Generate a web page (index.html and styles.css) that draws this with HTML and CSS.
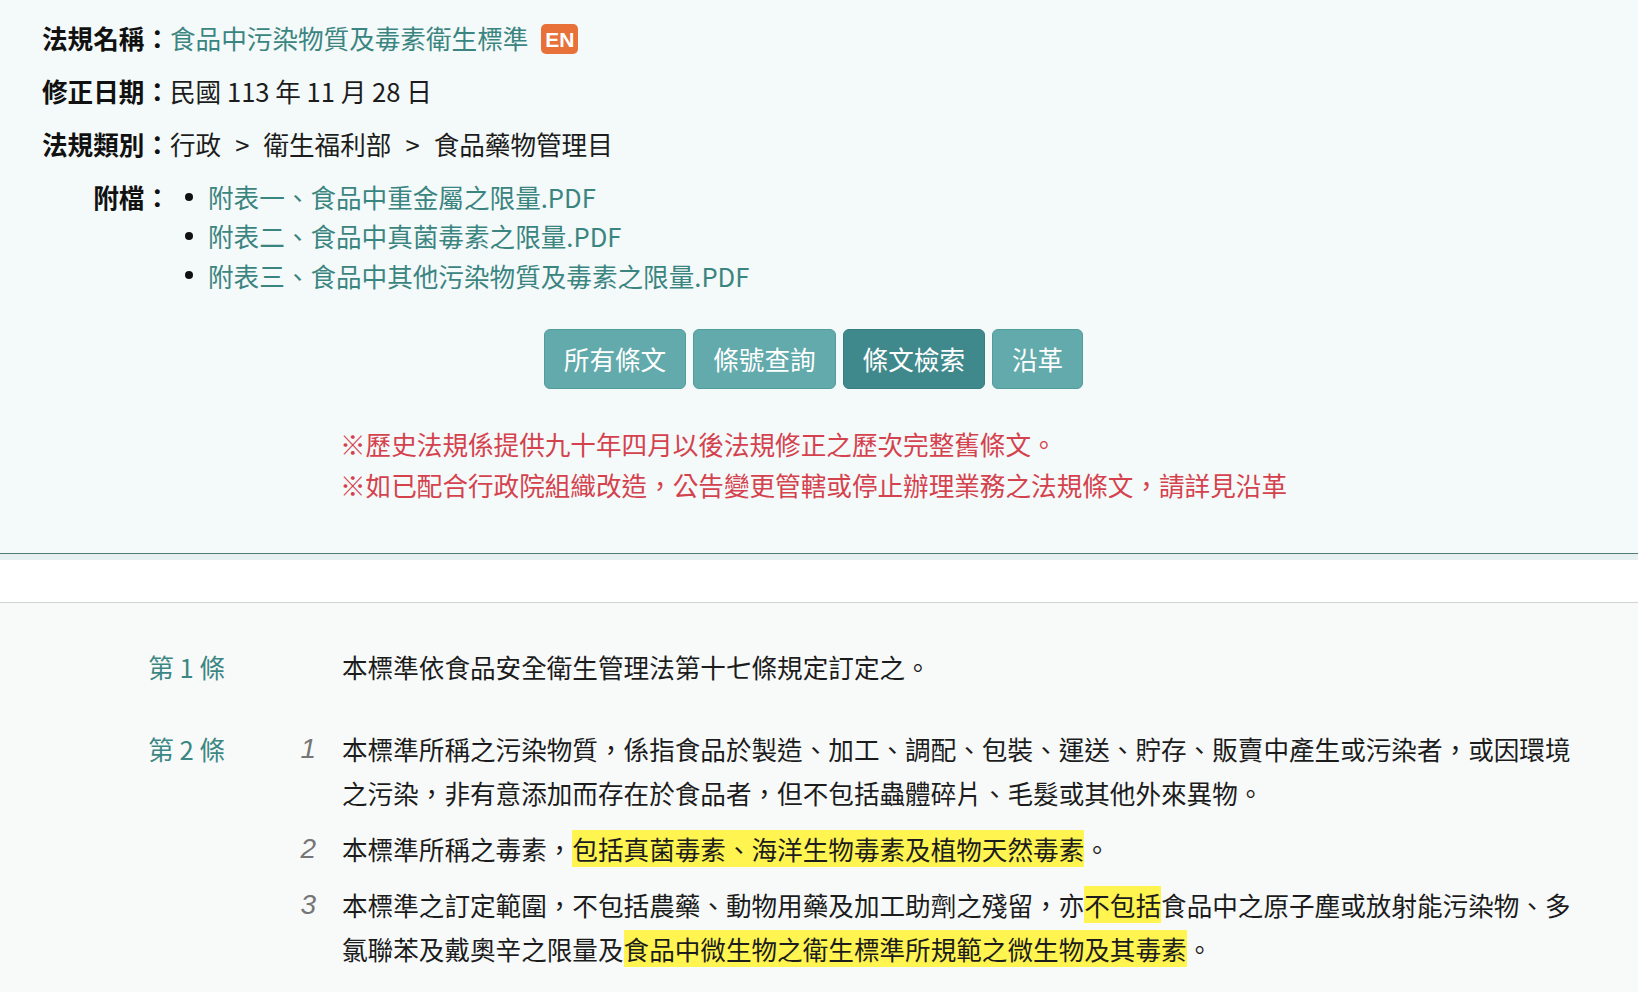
FILE: index.html
```html
<!DOCTYPE html>
<html lang="zh-Hant">
<head>
<meta charset="utf-8">
<title>食品中污染物質及毒素衛生標準</title>
<link rel="stylesheet" href="styles.css">
</head>
<body>
<section class="law-header">
  <div class="meta-row">
    <span class="meta-label">法規名稱：</span>
    <span class="meta-value"><a class="law-link" href="#">食品中污染物質及毒素衛生標準</a><span class="badge-en">EN</span></span>
  </div>
  <div class="meta-row">
    <span class="meta-label">修正日期：</span>
    <span class="meta-value">民國 113 年 11 月 28 日</span>
  </div>
  <div class="meta-row">
    <span class="meta-label">法規類別：</span>
    <span class="meta-value">行政<span class="sep">&gt;</span>衛生福利部<span class="sep">&gt;</span>食品藥物管理目</span>
  </div>
  <div class="meta-row">
    <span class="meta-label">附檔：</span>
    <ul class="attach-list">
      <li><a class="law-link" href="#">附表一、食品中重金屬之限量.PDF</a></li>
      <li><a class="law-link" href="#">附表二、食品中真菌毒素之限量.PDF</a></li>
      <li><a class="law-link" href="#">附表三、食品中其他污染物質及毒素之限量.PDF</a></li>
    </ul>
  </div>
  <nav class="tabs">
    <a class="tab" href="#">所有條文</a>
    <a class="tab" href="#">條號查詢</a>
    <a class="tab active" href="#">條文檢索</a>
    <a class="tab" href="#">沿革</a>
  </nav>
  <div class="notes-wrap">
    <div class="notes">
      <p>※歷史法規係提供九十年四月以後法規修正之歷次完整舊條文。</p>
      <p>※如已配合行政院組織改造，公告變更管轄或停止辦理業務之法規條文，請詳見沿革</p>
    </div>
  </div>
</section>
<div class="tab-strip"></div>
<main class="articles">
  <div class="article">
    <div class="art-no">第 1 條</div>
    <div class="art-body">
      <div class="para"><span class="para-num"></span><div class="para-text">本標準依食品安全衛生管理法第十七條規定訂定之。</div></div>
    </div>
  </div>
  <div class="article">
    <div class="art-no">第 2 條</div>
    <div class="art-body">
      <div class="para"><span class="para-num">1</span><div class="para-text">本標準所稱之污染物質，係指食品於製造、加工、調配、包裝、運送、貯存、販賣中產生或污染者，或因環境之污染，非有意添加而存在於食品者，但不包括蟲體碎片、毛髮或其他外來異物。</div></div>
      <div class="para"><span class="para-num">2</span><div class="para-text">本標準所稱之毒素，<span class="hl">包括真菌毒素、海洋生物毒素及植物天然毒素</span>。</div></div>
      <div class="para"><span class="para-num">3</span><div class="para-text">本標準之訂定範圍，不包括農藥、動物用藥及加工助劑之殘留，亦<span class="hl">不包括</span>食品中之原子塵或放射能污染物、多氯聯苯及戴奧辛之限量及<span class="hl">食品中微生物之衛生標準所規範之微生物及其毒素</span>。</div></div>
    </div>
  </div>
</main>
</body>
</html>
```

FILE: styles.css
```css
body {
  margin: 0;
  font-family: "Noto Sans CJK TC", "Noto Sans", sans-serif;
  font-size: 25.6px;
  color: #1c1c1c;
  background: #f8fafa;
}

.law-header {
  background: #f4f9f9;
  padding: 18px 53px 48px 42px;
  border-bottom: 1px solid #4f7c73;
}

.meta-row {
  display: flex;
  line-height: 40px;
  margin-bottom: 13px;
}

.meta-label {
  flex: none;
  width: 128px;
  text-align: right;
  font-weight: 700;
  color: #111;
  white-space: nowrap;
}

.meta-value {
  display: flex;
  align-items: center;
  white-space: nowrap;
}

.law-link {
  color: #3b8581;
  text-decoration: none;
}

.sep {
  margin: 0 14px;
}

.badge-en {
  display: inline-flex;
  align-items: center;
  justify-content: center;
  width: 37px;
  height: 30px;
  margin: 2px 0 0 13px;
  border-radius: 5px;
  background: #e8713a;
  color: #fff;
  font-family: "Liberation Sans", sans-serif;
  font-weight: 700;
  font-size: 21px;
  line-height: 1;
}

.attach-list {
  list-style: none;
  margin: 0;
  padding: 0 0 0 15px;
}

.attach-list li {
  display: flex;
  align-items: center;
  line-height: 39.3px;
}

.attach-list li::before {
  content: "";
  flex: none;
  width: 8px;
  height: 8px;
  margin-right: 15px;
  border-radius: 50%;
  background: #111;
}

.tabs {
  display: flex;
  justify-content: center;
  gap: 7px;
  margin-top: 34px;
}

.tab {
  display: flex;
  align-items: center;
  height: 58px;
  padding: 0 19px;
  border: 1px solid #529c9c;
  border-radius: 6px;
  background: #62aaab;
  color: #fff;
  text-decoration: none;
}

.tab.active {
  background: #3f898c;
  border-color: #367e80;
}

.notes-wrap {
  text-align: center;
  margin-top: 34.5px;
}

.notes {
  display: inline-block;
  text-align: left;
  color: #d4424e;
  line-height: 41px;
}

.notes p {
  margin: 0;
}

.tab-strip {
  height: 42px;
  background: #fff;
  border-top: 6px solid #e7f0f0;
  border-bottom: 1px solid #d2d4d4;
}

.articles {
  padding: 41.5px 0 30px;
}

.article {
  display: flex;
  margin-bottom: 26.5px;
}

.art-no {
  flex: none;
  width: 225px;
  text-align: right;
  color: #3b8783;
  line-height: 44px;
  white-space: nowrap;
}

.para {
  display: flex;
  margin-bottom: 12px;
  line-height: 44px;
}

.para-num {
  flex: none;
  width: 91px;
  text-align: right;
  font-family: "Liberation Sans", sans-serif;
  font-style: italic;
  font-size: 28px;
  color: #767676;
}

.para-text {
  width: 1240px;
  margin-left: 26px;
}

.hl {
  background: #fff450;
}
```
